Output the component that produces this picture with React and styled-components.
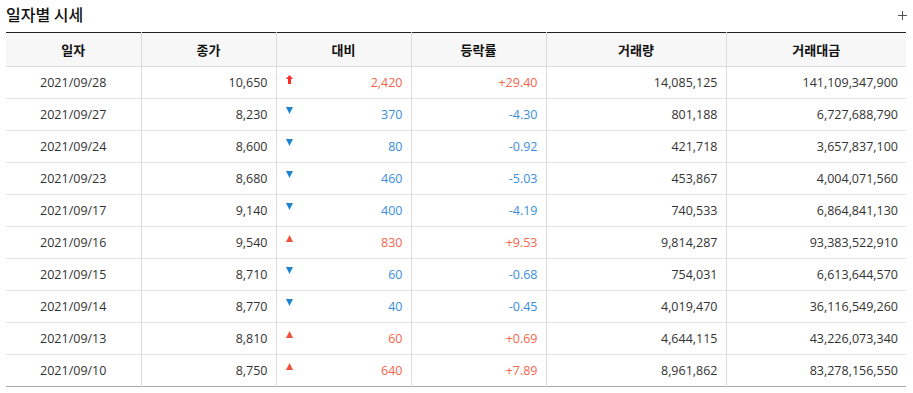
import React from "react";
import styled, { createGlobalStyle } from "styled-components";

const Global = createGlobalStyle`
  html, body { margin: 0; padding: 0; background: #fff; }
  body { font-family: "Open Sans", "Noto Sans CJK KR", sans-serif; }
`;

const Wrap = styled.div`
  width: 913px;
  padding: 0 7px 0 6px;
  box-sizing: border-box;
`;

const TitleBar = styled.div`
  height: 32px;
  display: flex;
  justify-content: space-between;
  align-items: flex-start;
  padding-top: 3px;
  box-sizing: border-box;
`;

const Title = styled.h3`
  margin: 0;
  font-family: "Noto Sans CJK KR", sans-serif;
  font-size: 16px;
  line-height: 22px;
  font-weight: 500;
  color: #111;
  letter-spacing: 0;
`;

const PlusBtn = styled.button`
  border: 0;
  background: none;
  padding: 0;
  width: 12px;
  height: 24px;
  margin-right: -2px;
  display: flex;
  align-items: center;
  justify-content: center;
  cursor: pointer;
`;

const Table = styled.table`
  width: 900px;
  border-collapse: collapse;
  table-layout: fixed;
  border-top: 1px solid #222;
  border-bottom: 1px solid #a8a8a8;
`;

const HeadCell = styled.th`
  height: 34px;
  padding: 0;
  background: #f7f7f7;
  border-bottom: 1px solid #dcdcdc;
  border-left: 1px solid #dcdcdc;
  &:first-child { border-left: 0; }
  font-family: "Noto Sans CJK KR", sans-serif;
  font-size: 13px;
  font-weight: 700;
  color: #111;
  text-align: center;
  box-sizing: border-box;
`;

const Row = styled.tr`
  & + & td { border-top: 1px solid #e1e1e1; }
`;

const Cell = styled.td`
  height: 32px;
  padding: 0 8px;
  border-left: 1px solid #dcdcdc;
  &:first-child { border-left: 0; }
  font-size: 12.5px;
  color: ${(p) => (p.$tone === "up" ? "#f6654b" : p.$tone === "down" ? "#3b8de0" : "#333")};
  text-align: ${(p) => (p.$center ? "center" : "right")};
  white-space: nowrap;
  box-sizing: border-box;
`;

const ChangeBox = styled.div`
  display: flex;
  justify-content: space-between;
  align-items: center;
  padding-left: 1px;
`;

const IconSlot = styled.span`
  display: inline-flex;
  width: 8px;
  height: 10px;
  align-items: flex-start;
  margin-top: -5px;
`;

function Arrow({ kind }) {
  if (kind === "limit")
    return (
      <svg width="7" height="9" viewBox="0 0 7 9">
        <path d="M3.5 0 L7 4 L5 4 L5 9 L2 9 L2 4 L0 4 Z" fill="#ff2b2b" />
      </svg>
    );
  if (kind === "up")
    return (
      <svg width="7" height="7" viewBox="0 0 7 7">
        <path d="M3.5 0 L7 7 L0 7 Z" fill="#f0503a" />
      </svg>
    );
  return (
    <svg width="7" height="7" viewBox="0 0 7 7">
      <path d="M0 0 L7 0 L3.5 7 Z" fill="#1f83d4" />
    </svg>
  );
}

const rows = [
  ["2021/09/28", "10,650", "limit", "2,420", "+29.40", "14,085,125", "141,109,347,900"],
  ["2021/09/27", "8,230", "down", "370", "-4.30", "801,188", "6,727,688,790"],
  ["2021/09/24", "8,600", "down", "80", "-0.92", "421,718", "3,657,837,100"],
  ["2021/09/23", "8,680", "down", "460", "-5.03", "453,867", "4,004,071,560"],
  ["2021/09/17", "9,140", "down", "400", "-4.19", "740,533", "6,864,841,130"],
  ["2021/09/16", "9,540", "up", "830", "+9.53", "9,814,287", "93,383,522,910"],
  ["2021/09/15", "8,710", "down", "60", "-0.68", "754,031", "6,613,644,570"],
  ["2021/09/14", "8,770", "down", "40", "-0.45", "4,019,470", "36,116,549,260"],
  ["2021/09/13", "8,810", "up", "60", "+0.69", "4,644,115", "43,226,073,340"],
  ["2021/09/10", "8,750", "up", "640", "+7.89", "8,961,862", "83,278,156,550"],
];

const widths = [135, 135, 135, 135, 180, 180];
const heads = ["일자", "종가", "대비", "등락률", "거래량", "거래대금"];

export default function App() {
  return (
    <>
      <Global />
      <Wrap>
        <TitleBar>
          <Title>일자별 시세</Title>
          <PlusBtn aria-label="더보기">
            <svg width="11" height="11" viewBox="0 0 11 11">
              <path d="M5.5 1 V10 M1 5.5 H10" stroke="#555" strokeWidth="1" />
            </svg>
          </PlusBtn>
        </TitleBar>
        <Table>
          <colgroup>
            {widths.map((w, i) => (
              <col key={i} style={{ width: w }} />
            ))}
          </colgroup>
          <thead>
            <tr>
              {heads.map((h) => (
                <HeadCell key={h}>{h}</HeadCell>
              ))}
            </tr>
          </thead>
          <tbody>
            {rows.map((r) => {
              const tone = r[2] === "down" ? "down" : "up";
              return (
                <Row key={r[0]}>
                  <Cell $center>{r[0]}</Cell>
                  <Cell>{r[1]}</Cell>
                  <Cell $tone={tone}>
                    <ChangeBox>
                      <IconSlot>
                        <Arrow kind={r[2]} />
                      </IconSlot>
                      <span>{r[3]}</span>
                    </ChangeBox>
                  </Cell>
                  <Cell $tone={tone}>{r[4]}</Cell>
                  <Cell>{r[5]}</Cell>
                  <Cell>{r[6]}</Cell>
                </Row>
              );
            })}
          </tbody>
        </Table>
      </Wrap>
    </>
  );
}
